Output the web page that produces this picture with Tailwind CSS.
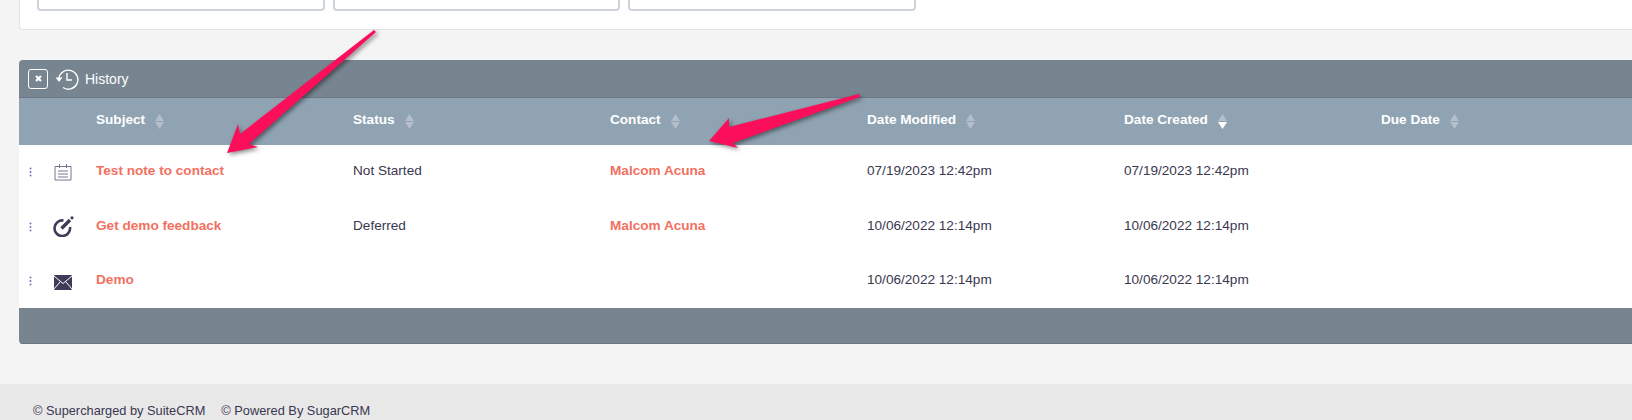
<!DOCTYPE html>
<html lang="en">
<head>
  <meta charset="UTF-8" />
  <title>History</title>
  <script src="https://cdn.jsdelivr.net/npm/@tailwindcss/browser@4"></script>
</head>
<body class="relative h-[420px] overflow-hidden bg-[#f4f4f4] font-['Liberation_Sans',Arial,sans-serif] text-[13.6px] text-[#3a3750]">

  <!-- top panel with the cut off inputs -->
  <div class="ml-[19px] flex h-[30px] gap-[8px] rounded-bl-[4px] border-b border-l border-[#e2e2e2] bg-white pl-[17px]">
    <div class="h-[11px] w-[288px] rounded-b-[4px] border-2 border-t-0 border-[#cfd4dc]"></div>
    <div class="h-[11px] w-[287px] rounded-b-[4px] border-2 border-t-0 border-[#cfd4dc]"></div>
    <div class="h-[11px] w-[288px] rounded-b-[4px] border-2 border-t-0 border-[#cfd4dc]"></div>
  </div>

  <!-- history subpanel -->
  <section class="ml-[19px] mt-[30px] overflow-hidden rounded-l-[4px]">
    <div class="flex h-[38px] items-center border-b border-[#6b7883] bg-[#778590] pl-[9px] text-[14px] text-white">
      <span class="flex h-[20px] w-[20px] items-center justify-center rounded-[3px] border border-white">
        <svg width="9" height="9" viewBox="0 0 9 9"><path d="M2 2l5 5M7 2l-5 5" stroke="#fff" stroke-width="2.2" /></svg>
      </span>
      <svg class="ml-[6px]" width="25" height="24" viewBox="0 0 25 24" fill="none" stroke="#fff" stroke-width="1.4">
        <path d="M5 11a9.5 9.5 0 1 1 4 9.5" />
        <path d="M1.5 10.5h7L5 15z" fill="#fff" stroke="none" />
        <path d="M13 6v7h5" />
      </svg>
      <span class="ml-[6px] mt-[2px]">History</span>
    </div>

    <table class="w-full table-fixed border-collapse">
      <thead class="bg-[#90a3b2] text-left font-bold text-white">
        <tr class="h-[47px]">
          <th class="w-[77px]"></th>
          <th class="w-[257px] font-bold"><span class="flex items-center gap-[10px]"><span class="mb-[2px]">Subject</span> <svg width="9" height="15" viewBox="0 0 9 15"><path d="M4.5 0L9 7H0z" fill="#b4bfca" /><path d="M4.500 15L9 8H0z" fill="#b4bfca" /></svg></span></th>
          <th class="w-[257px] font-bold"><span class="flex items-center gap-[10px]"><span class="mb-[2px]">Status</span> <svg width="9" height="15" viewBox="0 0 9 15"><path d="M4.5 0L9 7H0z" fill="#b4bfca" /><path d="M4.500 15L9 8H0z" fill="#b4bfca" /></svg></span></th>
          <th class="w-[257px] font-bold"><span class="flex items-center gap-[10px]"><span class="mb-[2px]">Contact</span> <svg width="9" height="15" viewBox="0 0 9 15"><path d="M4.5 0L9 7H0z" fill="#b4bfca" /><path d="M4.500 15L9 8H0z" fill="#b4bfca" /></svg></span></th>
          <th class="w-[257px] font-bold"><span class="flex items-center gap-[10px]"><span class="mb-[2px]">Date Modified</span> <svg width="9" height="15" viewBox="0 0 9 15"><path d="M4.5 0L9 7H0z" fill="#b4bfca" /><path d="M4.500 15L9 8H0z" fill="#b4bfca" /></svg></span></th>
          <th class="w-[257px] font-bold"><span class="flex items-center gap-[10px]"><span class="mb-[2px]">Date Created</span> <svg width="9" height="15" viewBox="0 0 9 15"><path d="M4.5 0L9 7H0z" fill="#b4bfca" /><path d="M4.500 15L9 8H0z" fill="#fff" /></svg></span></th>
          <th class="font-bold"><span class="flex items-center gap-[10px]"><span class="mb-[2px]">Due Date</span> <svg width="9" height="15" viewBox="0 0 9 15"><path d="M4.5 0L9 7H0z" fill="#b4bfca" /><path d="M4.500 15L9 8H0z" fill="#b4bfca" /></svg></span></th>
        </tr>
      </thead>
      <tbody class="bg-white">
        <tr class="h-[54px]">
          <td>
            <div class="flex items-center pl-[10px]">
              <svg width="3" height="10" viewBox="0 0 3 10" fill="#7b6fc0"><circle cx="1.500" cy="1.500" r="1" /><circle cx="1.500" cy="5" r="1" /><circle cx="1.500" cy="8.500" r="1" /></svg>
              <svg class="ml-[22px]" width="18" height="17" viewBox="0 0 18 17" fill="none" stroke="#77758a"><path d="M1 2.500h16V16H1z" /><path d="M5.500 0v4M12.500 0v4M4 7h10M4 10h10M4 13h10" /></svg>
            </div>
          </td>
          <td class="pb-[1px] font-bold text-[#f2705f]">Test note to contact</td>
          <td class="pb-[1px]">Not Started</td>
          <td class="pb-[1px] font-bold text-[#f2705f]">Malcom Acuna</td>
          <td class="pb-[1px]">07/19/2023 12:42pm</td>
          <td class="pb-[1px]">07/19/2023 12:42pm</td>
          <td></td>
        </tr>
        <tr class="h-[55px]">
          <td>
            <div class="flex items-center pl-[10px]">
              <svg width="3" height="10" viewBox="0 0 3 10" fill="#7b6fc0"><circle cx="1.500" cy="1.500" r="1" /><circle cx="1.500" cy="5" r="1" /><circle cx="1.500" cy="8.500" r="1" /></svg>
              <svg class="ml-[20px]" width="22" height="21" viewBox="0 0 22 21" fill="none" stroke="#3f3b58" stroke-width="2.600"><path d="M11.500 4.500a7.800 7.800 0 1 0 6.500 6.500" /><path d="M9.500 12.500L18 4" stroke-width="3.400" /><circle cx="20" cy="1.800" r="1.600" fill="#3f3b58" stroke="none" /></svg>
            </div>
          </td>
          <td class="pb-[1px] font-bold text-[#f2705f]">Get demo feedback</td>
          <td class="pb-[1px]">Deferred</td>
          <td class="pb-[1px] font-bold text-[#f2705f]">Malcom Acuna</td>
          <td class="pb-[1px]">10/06/2022 12:14pm</td>
          <td class="pb-[1px]">10/06/2022 12:14pm</td>
          <td></td>
        </tr>
        <tr class="h-[54px]">
          <td>
            <div class="flex items-center pl-[10px]">
              <svg width="3" height="10" viewBox="0 0 3 10" fill="#7b6fc0"><circle cx="1.500" cy="1.500" r="1" /><circle cx="1.500" cy="5" r="1" /><circle cx="1.500" cy="8.500" r="1" /></svg>
              <svg class="ml-[22px] mt-[2px]" width="18" height="15" viewBox="0 0 18 15"><rect width="18" height="15" rx="1" fill="#3f3b58" /><path d="M0 1l9 7.500L18 1M0 14l6.500-7.500M18 14l-6.500-7.500" fill="none" stroke="#fff" /></svg>
            </div>
          </td>
          <td class="pb-[1px] font-bold text-[#f2705f]">Demo</td>
          <td></td>
          <td></td>
          <td class="pb-[1px]">10/06/2022 12:14pm</td>
          <td class="pb-[1px]">10/06/2022 12:14pm</td>
          <td></td>
        </tr>
      </tbody>
    </table>

    <div class="h-[36px] border-b border-[#6b7883] bg-[#788590]"></div>
  </section>

  <footer class="mt-[40px] flex h-[36px] gap-[16px] bg-[#e8e8e8] pl-[33px] pt-[17px] text-[12.8px]">
    <span>© Supercharged by SuiteCRM</span>
    <span>© Powered By SugarCRM</span>
  </footer>

  <!-- annotation arrows drawn over the page -->
  <svg class="absolute left-0 top-0 drop-shadow-[2px_2px_2px_rgba(0,0,0,0.45)]" width="1632" height="420" viewBox="0 0 1632 420">
    <polygon points="374,30 240,134 238,124 227,153 258,147 249,144 376,32" fill="#fb0f5a" />
    <polygon points="859,94 729,127 729,118 709,141 738,148 733,143 860,97" fill="#fb0f5a" />
  </svg>
</body>
</html>
